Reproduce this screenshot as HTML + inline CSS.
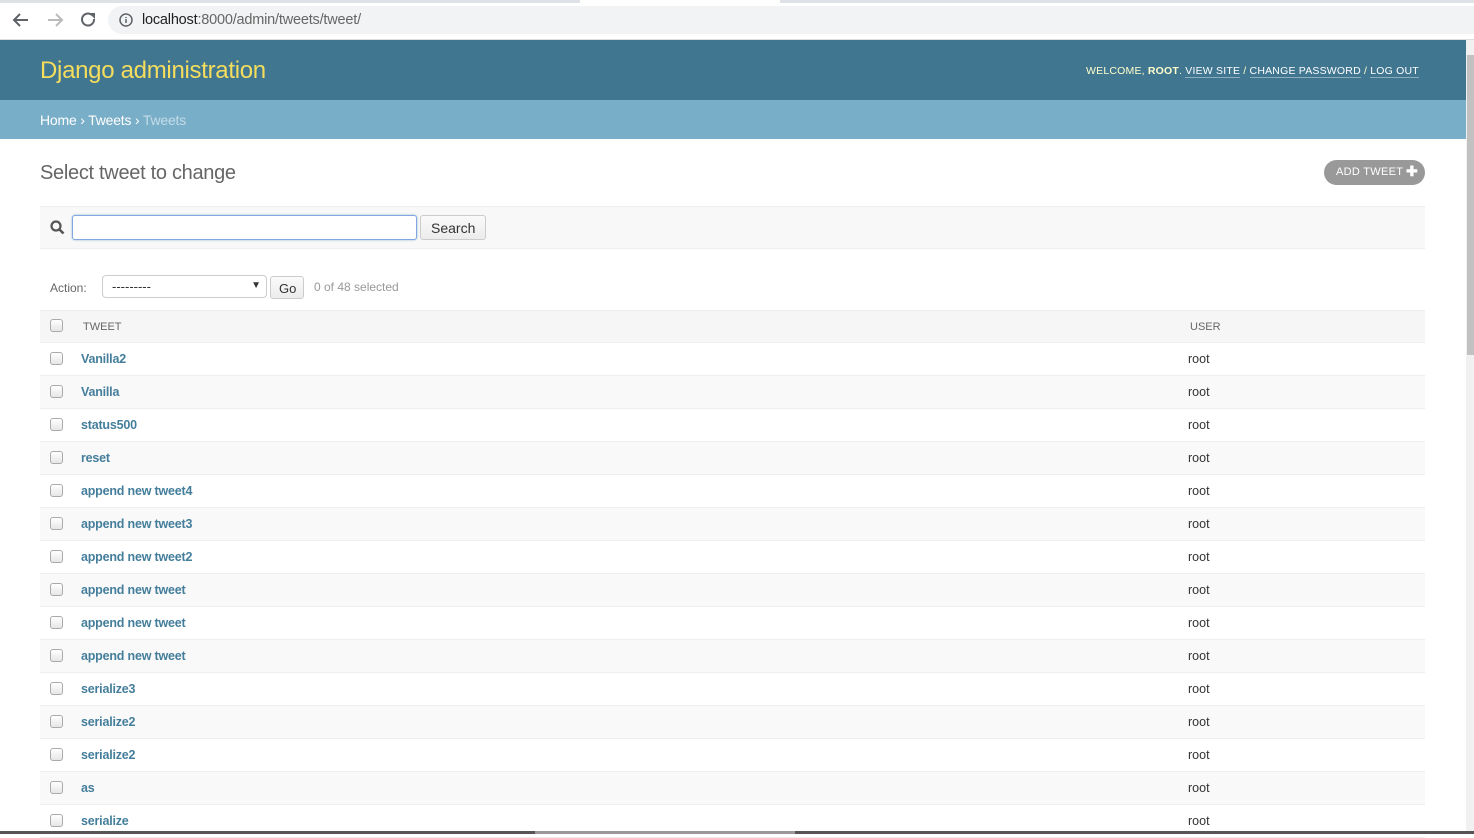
<!DOCTYPE html>
<html><head><meta charset="utf-8"><style>
*{box-sizing:border-box;margin:0;padding:0}
body{width:1474px;height:834px;overflow:hidden;background:#fff;font-family:"Liberation Sans",sans-serif;position:relative;color:#333}
.abs{position:absolute}
.chrome{left:0;top:0;width:1474px;height:40px;background:#fff;border-bottom:1px solid #ddd}
.url{left:108px;top:6px;width:1366px;height:28px;background:#f1f3f4;border-radius:14px 0 0 14px}
.hdr{left:0;top:40px;width:1466px;height:60px;background:#417690}
.bc{left:0;top:100px;width:1466px;height:39px;background:#79aec8;color:#fff;font-size:14px;padding:12px 40px;letter-spacing:-.2px}
.sb{left:1466px;top:40px;width:8px;height:794px;background:#f1f1f1}
.row{position:absolute;left:40px;width:1385px;height:33px;border-bottom:1px solid #eee;font-size:12.5px}
.cb{position:absolute;left:10px;top:9px;width:13px;height:13px;border:1px solid #aaa;border-radius:3px;background:linear-gradient(#fff,#e6e6e6)}
.t{position:absolute;left:41px;top:9px;color:#447e9b;font-weight:bold;letter-spacing:-.2px}
.u{position:absolute;left:1148px;top:9px;color:#333}
</style></head><body>
<div class="abs chrome"></div>
<div class="abs" style="left:0;top:0;width:580px;height:3px;background:#dee1e6"></div>
<div class="abs" style="left:780px;top:0;width:694px;height:3px;background:#dee1e6"></div>
<svg class="abs" style="left:12px;top:11px" width="90" height="18" viewBox="0 0 90 18"><path d="M16 9H3M8 3L2 9l6 6" stroke="#5f6368" stroke-width="2" fill="none"/><path d="M36 9h13M44 3l6 6-6 6" stroke="#bbb" stroke-width="2" fill="none"/><path d="M80 4a6 6 0 1 0 2 4" stroke="#5f6368" stroke-width="2" fill="none"/><path d="M77 2h6v6z" fill="#5f6368"/></svg>
<div class="abs url"></div>
<svg class="abs" style="left:119px;top:13px" width="14" height="14"><circle cx="7" cy="7" r="6" stroke="#5f6368" stroke-width="1.5" fill="none"/><path d="M7 6v4M7 4v1" stroke="#5f6368" stroke-width="1.5"/></svg>
<div class="abs" style="left:142px;top:12px;font-size:14.5px;color:#202124;letter-spacing:-.2px">localhost<span style="color:#666">:8000/admin/tweets/tweet/</span></div>
<div class="abs hdr"></div>
<div class="abs" style="left:40px;top:57px;font-size:24px;color:#f5dd5d;letter-spacing:-.3px">Django administration</div>
<div class="abs" style="left:1086px;top:65px;font-size:10.5px;color:#ffc;letter-spacing:.2px;white-space:nowrap">WELCOME, <b>ROOT</b>. <span style="color:#fff;border-bottom:1px solid rgba(255,255,255,.4)">VIEW SITE</span> / <span style="color:#fff;border-bottom:1px solid rgba(255,255,255,.4)">CHANGE PASSWORD</span> / <span style="color:#fff;border-bottom:1px solid rgba(255,255,255,.4)">LOG OUT</span></div>
<div class="abs bc">Home › Tweets › <span style="color:#c4dce8">Tweets</span></div>
<div class="abs sb"><div style="position:absolute;left:1px;top:15px;width:7px;height:300px;background:#c1c1c1"></div></div>
<div class="abs" style="left:40px;top:162px;font-size:20px;color:#666;letter-spacing:-.3px">Select tweet to change</div>
<div class="abs" style="left:1324px;top:160px;width:101px;height:25px;border-radius:13px;background:#999;color:#fff;font-size:11px;padding:6px 12px;letter-spacing:.3px">ADD TWEET <b style="font-size:14px;position:absolute;right:7px;top:3px">✚</b></div>
<div class="abs" style="left:40px;top:206px;width:1385px;height:43px;background:#f8f8f8;border-top:1px solid #eee;border-bottom:1px solid #eee"></div>
<svg class="abs" style="left:50px;top:220px" width="15" height="15"><circle cx="6" cy="6" r="4.5" stroke="#555" stroke-width="2.2" fill="none"/><path d="M9 9l4.5 4.5" stroke="#555" stroke-width="2.6"/></svg>
<div class="abs" style="left:72px;top:215px;width:345px;height:25px;border:1px solid #7ea7e3;border-radius:3px;background:#fff;box-shadow:0 0 2px #9bc"></div>
<div class="abs" style="left:420px;top:215px;width:66px;height:25px;border:1px solid #ccc;border-radius:3px;background:linear-gradient(#fafafa,#ececec);font-size:14px;padding:4px 10px;color:#333">Search</div>
<div class="abs" style="left:50px;top:281px;font-size:12px;color:#666">Action:</div>
<div class="abs" style="left:102px;top:275px;width:165px;height:23px;border:1px solid #ccc;border-radius:4px;background:#fff;font-size:13px;padding:3px 9px">---------<span style="position:absolute;right:5px;top:4px;font-size:10px">▼</span></div>
<div class="abs" style="left:270px;top:276px;width:34px;height:23px;border:1px solid #ccc;border-radius:3px;background:linear-gradient(#fafafa,#ececec);font-size:13px;padding:4px 8px">Go</div>
<div class="abs" style="left:314px;top:280px;font-size:12px;color:#999">0 of 48 selected</div>
<div class="row" style="top:310px;background:#f6f6f6;border-top:1px solid #eee"><div class="cb" style="top:8px"></div><div style="position:absolute;left:43px;top:10px;font-size:11px;color:#666">TWEET</div><div style="position:absolute;left:1150px;top:10px;font-size:11px;color:#666">USER</div></div>
<div class="row" style="top:343px"><div class="cb"></div><div class="t">Vanilla2</div><div class="u">root</div></div>
<div class="row" style="top:376px;background:#f9f9f9"><div class="cb"></div><div class="t">Vanilla</div><div class="u">root</div></div>
<div class="row" style="top:409px"><div class="cb"></div><div class="t">status500</div><div class="u">root</div></div>
<div class="row" style="top:442px;background:#f9f9f9"><div class="cb"></div><div class="t">reset</div><div class="u">root</div></div>
<div class="row" style="top:475px"><div class="cb"></div><div class="t">append new tweet4</div><div class="u">root</div></div>
<div class="row" style="top:508px;background:#f9f9f9"><div class="cb"></div><div class="t">append new tweet3</div><div class="u">root</div></div>
<div class="row" style="top:541px"><div class="cb"></div><div class="t">append new tweet2</div><div class="u">root</div></div>
<div class="row" style="top:574px;background:#f9f9f9"><div class="cb"></div><div class="t">append new tweet</div><div class="u">root</div></div>
<div class="row" style="top:607px"><div class="cb"></div><div class="t">append new tweet</div><div class="u">root</div></div>
<div class="row" style="top:640px;background:#f9f9f9"><div class="cb"></div><div class="t">append new tweet</div><div class="u">root</div></div>
<div class="row" style="top:673px"><div class="cb"></div><div class="t">serialize3</div><div class="u">root</div></div>
<div class="row" style="top:706px;background:#f9f9f9"><div class="cb"></div><div class="t">serialize2</div><div class="u">root</div></div>
<div class="row" style="top:739px"><div class="cb"></div><div class="t">serialize2</div><div class="u">root</div></div>
<div class="row" style="top:772px;background:#f9f9f9"><div class="cb"></div><div class="t">as</div><div class="u">root</div></div>
<div class="row" style="top:805px"><div class="cb"></div><div class="t">serialize</div><div class="u">root</div></div>
<div class="abs" style="left:0;top:831px;width:1474px;height:3px;background:#555"></div>
<div class="abs" style="left:535px;top:831px;width:260px;height:3px;background:#999"></div>
</body></html>
